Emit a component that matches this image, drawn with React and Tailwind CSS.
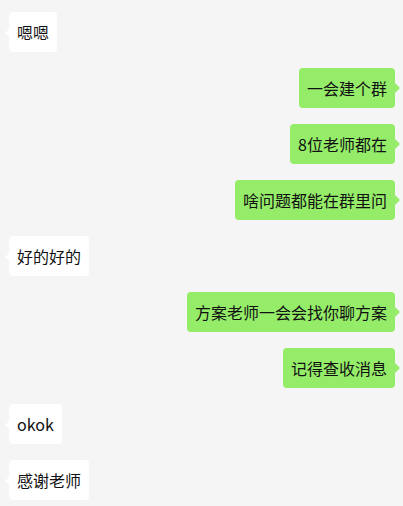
const messages = [
  { side: 'left', text: '嗯嗯' },
  { side: 'right', text: '一会建个群' },
  { side: 'right', text: '8位老师都在' },
  { side: 'right', text: '啥问题都能在群里问' },
  { side: 'left', text: '好的好的' },
  { side: 'right', text: '方案老师一会会找你聊方案' },
  { side: 'right', text: '记得查收消息' },
  { side: 'left', text: 'okok' },
  { side: 'left', text: '感谢老师' },
];

function Bubble({ side, text }) {
  if (side === 'left') {
    return (
      <div className="flex justify-start pl-[9px]">
        <div className="relative rounded-[4px] bg-white px-2 py-2 text-[16px] leading-6 text-[#111]">
          <span className="absolute left-[-4px] top-[16px] h-0 w-0 border-y-[5px] border-r-[5px] border-y-transparent border-r-white" />
          {text}
        </div>
      </div>
    );
  }
  return (
    <div className="flex justify-end pr-[8px]">
      <div className="relative rounded-[4px] bg-[#95ec69] px-2 py-2 text-[16px] leading-6 text-[#111]">
        <span className="absolute right-[-5px] top-[15px] h-0 w-0 border-y-[5px] border-l-[5px] border-y-transparent border-l-[#95ec69]" />
        {text}
      </div>
    </div>
  );
}

export default function App() {
  return (
    <div
      className="flex h-[506px] w-[403px] flex-col gap-4 overflow-hidden bg-[#f5f5f5] pt-3"
      style={{ fontFamily: '"Microsoft YaHei", "Noto Sans CJK SC", "Noto Sans", sans-serif' }}
    >
      {messages.map((m, i) => (
        <Bubble key={i} side={m.side} text={m.text} />
      ))}
    </div>
  );
}
